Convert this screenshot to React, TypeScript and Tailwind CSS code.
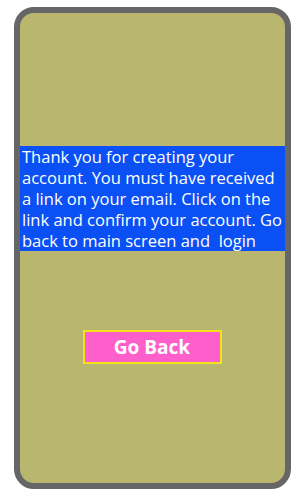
export default function App() {
  return (
    <div className="h-[497px] w-[300px] bg-white pl-[14px] pt-[7px]">
      <div className="flex h-[482px] w-[277px] flex-col rounded-[20px] border-[6px] border-[#666666] bg-[#b9b76f] pt-[133px] font-['Open_Sans',sans-serif]">
        <p className="bg-[#0a50f5] pl-[2px] text-[16.5px] leading-[21px] text-white">
          Thank you for creating your account. You must have received a link on your email. Click on the link and confirm your account. Go back to main screen and&nbsp; login
        </p>
        <div className="mt-[79px] flex justify-center">
          <button type="button" className="h-[34px] w-[139px] border-2 border-[#f5e31a] bg-[#ff5fcb] text-[19px] font-bold text-white ml-[-1px]">
            Go Back
          </button>
        </div>
      </div>
    </div>
  );
}
